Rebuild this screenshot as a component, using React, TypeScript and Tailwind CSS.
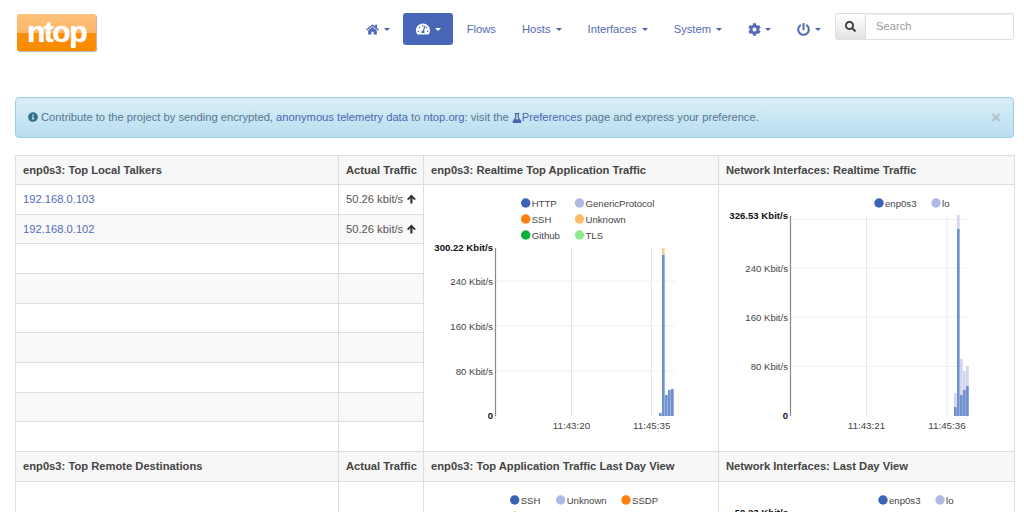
import * as React from "react";
import { FaCog, FaFlask, FaHome, FaInfoCircle, FaPowerOff, FaSearch, FaTachometerAlt } from "react-icons/fa";

const BLUE = "#3b62b5";
const LILAC = "#b0b9e4";
const BAR_BLUE = "#6f92cf";
const BAR_LILAC = "#d2d6f0";

function Caret({ className = "border-t-[#4a62b0]" }: { className?: string }) {
  return <span className={`ml-[5px] inline-block h-0 w-0 border-x-[3.5px] border-t-[3.5px] border-x-transparent ${className}`} />;
}

function NavItem({ children, caret = true }: { children: React.ReactNode; caret?: boolean }) {
  return (
    <a className="flex h-8 items-center px-[13px] text-[#566ab3]">
      {children}
      {caret && <Caret />}
    </a>
  );
}

function ArrowUp() {
  return (
    <svg viewBox="0 0 10 10" className="h-[10px] w-[10px] text-[#333]">
      <path d="M5 0 L10 5 L8.6 6.4 L6.2 4.1 V10 H3.8 V4.1 L1.4 6.4 L0 5 Z" fill="currentColor" />
    </svg>
  );
}

function LegendItem({ x, y, color, label }: { x: number; y: number; color: string; label: string }) {
  return (
    <g>
      <circle cx={x} cy={y} r={4.7} fill={color} />
      <text x={x + 6} y={y + 3.5} fontSize={9.6} fill="#444">
        {label}
      </text>
    </g>
  );
}

function YLabel({ x, y, label, bold }: { x: number; y: number; label: string; bold?: boolean }) {
  return (
    <text x={x} y={y + 3.5} fontSize={9.6} textAnchor="end" fontWeight={bold ? 700 : 400} fill={bold ? "#111" : "#444"}>
      {label}
    </text>
  );
}

function Bar({ x, top, bottom, fill }: { x: number; top: number; bottom: number; fill: string }) {
  return <rect x={x} y={top} width={2.7} height={bottom - top} fill={fill} />;
}

function AppTrafficChart() {
  return (
    <svg viewBox="423 185 295 266" className="block h-[266px] w-[295px] font-['Liberation_Sans',sans-serif]">
      <LegendItem x={524.7} y={203} color={BLUE} label="HTTP" />
      <LegendItem x={578.5} y={203} color={LILAC} label="GenericProtocol" />
      <LegendItem x={524.7} y={219} color="#ff7f0e" label="SSH" />
      <LegendItem x={578.5} y={219} color="#ffbb66" label="Unknown" />
      <LegendItem x={524.7} y={235} color="#0eaf3c" label="Github" />
      <LegendItem x={578.5} y={235} color="#8ee88e" label="TLS" />
      {[281, 326, 371].map((y) => (
        <line key={y} x1={495} x2={674} y1={y} y2={y} stroke="#f0f0f0" />
      ))}
      <line x1={570.5} x2={570.5} y1={248} y2={416} stroke="#e4e4e4" />
      <line x1={650.5} x2={650.5} y1={248} y2={416} stroke="#e8e8e8" />
      <Bar x={658} top={413} bottom={416} fill={BAR_BLUE} />
      <Bar x={661} top={248} bottom={255} fill="#fdd08f" />
      <Bar x={661} top={255} bottom={416} fill={BAR_BLUE} />
      <Bar x={664} top={395} bottom={416} fill={BAR_BLUE} />
      <Bar x={667} top={390} bottom={416} fill={BAR_BLUE} />
      <Bar x={670} top={389} bottom={416} fill={BAR_BLUE} />
      <line x1={494.5} x2={494.5} y1={248} y2={416} stroke="#888" strokeWidth={1.2} />
      <YLabel x={492} y={247} label="300.22 Kbit/s" bold />
      <YLabel x={492} y={281} label="240 Kbit/s" />
      <YLabel x={492} y={326} label="160 Kbit/s" />
      <YLabel x={492} y={371} label="80 Kbit/s" />
      <YLabel x={492} y={415} label="0" bold />
      <text x={570.5} y={429} fontSize={9.8} textAnchor="middle" fill="#444">11:43:20</text>
      <text x={650.7} y={429} fontSize={9.8} textAnchor="middle" fill="#444">11:45:35</text>
    </svg>
  );
}

function InterfaceTrafficChart() {
  return (
    <svg viewBox="718 185 296 266" className="block h-[266px] w-[296px] font-['Liberation_Sans',sans-serif]">
      <LegendItem x={878} y={203} color={BLUE} label="enp0s3" />
      <LegendItem x={935} y={203} color={LILAC} label="lo" />
      {[219.5, 268, 317, 366.5].map((y) => (
        <line key={y} x1={790} x2={968} y1={y} y2={y} stroke="#f0f0f0" />
      ))}
      <line x1={865.5} x2={865.5} y1={216} y2={416} stroke="#e8e8e8" />
      <line x1={946} x2={946} y1={216} y2={416} stroke="#e8e8e8" />
      <Bar x={953} top={393} bottom={416} fill={BAR_LILAC} />
      <Bar x={953} top={407} bottom={416} fill={BAR_BLUE} />
      <Bar x={956} top={215} bottom={229} fill={BAR_LILAC} />
      <Bar x={956} top={229} bottom={416} fill={BAR_BLUE} />
      <Bar x={959} top={359} bottom={416} fill={BAR_LILAC} />
      <Bar x={959} top={395} bottom={416} fill={BAR_BLUE} />
      <Bar x={962} top={371} bottom={416} fill={BAR_LILAC} />
      <Bar x={962} top={390} bottom={416} fill={BAR_BLUE} />
      <Bar x={965} top={366} bottom={416} fill={BAR_LILAC} />
      <Bar x={965} top={386} bottom={416} fill={BAR_BLUE} />
      <line x1={789.5} x2={789.5} y1={216} y2={416} stroke="#888" strokeWidth={1.2} />
      <YLabel x={787} y={215} label="326.53 Kbit/s" bold />
      <YLabel x={787} y={268} label="240 Kbit/s" />
      <YLabel x={787} y={317} label="160 Kbit/s" />
      <YLabel x={787} y={366.5} label="80 Kbit/s" />
      <YLabel x={787} y={415} label="0" bold />
      <text x={865.5} y={429} fontSize={9.8} textAnchor="middle" fill="#444">11:43:21</text>
      <text x={946} y={429} fontSize={9.8} textAnchor="middle" fill="#444">11:45:36</text>
    </svg>
  );
}

function AppDayChart() {
  return (
    <svg viewBox="423 482 295 60" className="block h-[60px] w-[295px] font-['Liberation_Sans',sans-serif]">
      <LegendItem x={513.7} y={500} color={BLUE} label="SSH" />
      <LegendItem x={559.7} y={500} color={LILAC} label="Unknown" />
      <LegendItem x={625} y={500} color="#ff7f0e" label="SSDP" />
      <circle cx={513.7} cy={516} r={4.7} fill="#f5e663" />
    </svg>
  );
}

function InterfaceDayChart() {
  return (
    <svg viewBox="718 482 296 60" className="block h-[60px] w-[296px] font-['Liberation_Sans',sans-serif]">
      <LegendItem x={882} y={500} color={BLUE} label="enp0s3" />
      <LegendItem x={939} y={500} color={LILAC} label="lo" />
      <YLabel x={787} y={512} label="50.23 Kbit/s" bold />
    </svg>
  );
}

const talkers = ["192.168.0.103", "192.168.0.102", "", "", "", "", "", "", ""];
const cellClass = "border border-[#ddd] px-[7px] align-middle";
const headClass = "h-[29px] whitespace-nowrap border border-[#ddd] bg-[#f7f7f7] px-[7px] text-left align-middle font-bold text-[#444]";
const lowerHeadClass = "h-[30px] whitespace-nowrap border border-[#ddd] bg-[#f7f7f7] px-[7px] text-left align-middle font-bold text-[#444]";

export default function App() {
  return (
    <div className="h-[512px] w-[1024px] overflow-hidden bg-white font-['Liberation_Sans',sans-serif] text-[11.2px] text-[#333]">
      {/* Navbar */}
      <nav className="flex h-[97px] items-start justify-between pr-[10px] pl-[17px] pt-[13px]">
        <div className="relative mt-px h-[37px] w-[79px] overflow-hidden rounded-[2px] bg-[linear-gradient(#fdc27c_0%,#fdb768_50%,#fc8e05_51%,#fb8c00_100%)] shadow-[1px_1px_1px_rgba(0,0,0,0.3)]">
          <div className="text-center text-[30px] leading-[35px] font-bold tracking-[-1.5px] text-white [text-shadow:0_0_1px_#fff]">ntop</div>
        </div>
        <div className="flex items-start">
          <NavItem><FaHome className="h-[13px] w-[13px]" /></NavItem>
          <a className="mr-px flex h-8 items-center rounded-[3px] bg-[#4766b8] pr-[12px] pl-[13px] text-white">
            <FaTachometerAlt className="h-[14px] w-[14px]" />
            <Caret className="border-t-white" />
          </a>
          <NavItem caret={false}>Flows</NavItem>
          <NavItem>Hosts</NavItem>
          <NavItem>Interfaces</NavItem>
          <NavItem>System</NavItem>
          <NavItem><FaCog className="-mr-px h-[13px] w-[13px]" /></NavItem>
          <NavItem><FaPowerOff className="h-[13px] w-[13px]" /></NavItem>
          <div className="ml-px flex h-[27px]">
            <button className="flex w-[31px] items-center justify-center rounded-l-[3px] border border-[#ddd] bg-[linear-gradient(#fff,#e2e2e2)] text-[#333]">
              <FaSearch className="h-[11px] w-[11px]" />
            </button>
            <input
              placeholder="Search"
              className="w-[148px] rounded-r-[3px] border border-l-0 border-[#ddd] px-[10px] text-[11.2px] shadow-[inset_0_1px_1px_rgba(0,0,0,0.075)] outline-none placeholder:text-[#999]"
            />
          </div>
        </div>
      </nav>

      <main className="pr-[10px] pl-[15px]">
        {/* Alert */}
        <div className="mb-[17px] flex h-[41px] items-center justify-between rounded-[4px] border border-[#9acfea] bg-[linear-gradient(#d9edf7,#b9def0)] pr-[12px] pl-[12px] text-[#56768f]">
          <p className="flex items-center">
            <FaInfoCircle className="mr-[3px] h-[10px] w-[10px] text-[#31708f]" />
            <span>
              Contribute to the project by sending encrypted, <a className="text-[#4a66b0]">anonymous telemetry data</a> to{" "}
              <a className="text-[#4a66b0]">ntop.org</a>: visit the <FaFlask className="inline h-[10px] w-[10px] text-[#4a66b0]" />
              <a className="text-[#4a66b0]">Preferences</a> page and express your preference.
            </span>
          </p>
          <span className="text-[17px] leading-none font-bold text-[#b3bfc7]">×</span>
        </div>

        {/* Tables and charts */}
        <table className="w-[999px] table-fixed border-collapse">
          <colgroup>
            <col className="w-[323px]" />
            <col className="w-[85px]" />
            <col className="w-[295px]" />
            <col className="w-[296px]" />
          </colgroup>
          <thead>
            <tr>
              <th className={headClass}>enp0s3: Top Local Talkers</th>
              <th className={headClass}>Actual Traffic</th>
              <th className={headClass}>enp0s3: Realtime Top Application Traffic</th>
              <th className={headClass}>Network Interfaces: Realtime Traffic</th>
            </tr>
          </thead>
          <tbody>
            {talkers.map((ip, i) => (
              <tr key={i} className={i % 2 === 1 ? "h-[29.6px] bg-[#f9f9f9]" : "h-[29.6px] bg-white"}>
                <td className={cellClass}><a className="text-[#566cb5]">{ip}</a></td>
                <td className={cellClass}>
                  {ip && (
                    <span className="flex items-center gap-[4px] whitespace-nowrap text-[#555]">
                      50.26 kbit/s <ArrowUp />
                    </span>
                  )}
                </td>
                {i === 0 && (
                  <>
                    <td rowSpan={9} className="border border-[#ddd] bg-white p-0 align-top"><AppTrafficChart /></td>
                    <td rowSpan={9} className="border border-[#ddd] bg-white p-0 align-top"><InterfaceTrafficChart /></td>
                  </>
                )}
              </tr>
            ))}
          </tbody>
          <thead>
            <tr>
              <th className={lowerHeadClass}>enp0s3: Top Remote Destinations</th>
              <th className={lowerHeadClass}>Actual Traffic</th>
              <th className={lowerHeadClass}>enp0s3: Top Application Traffic Last Day View</th>
              <th className={lowerHeadClass}>Network Interfaces: Last Day View</th>
            </tr>
          </thead>
          <tbody>
            <tr className="h-[30px] bg-white">
              <td className={cellClass} />
              <td className={cellClass} />
              <td className="border border-[#ddd] bg-white p-0 align-top"><AppDayChart /></td>
              <td className="border border-[#ddd] bg-white p-0 align-top"><InterfaceDayChart /></td>
            </tr>
          </tbody>
        </table>
      </main>
    </div>
  );
}
